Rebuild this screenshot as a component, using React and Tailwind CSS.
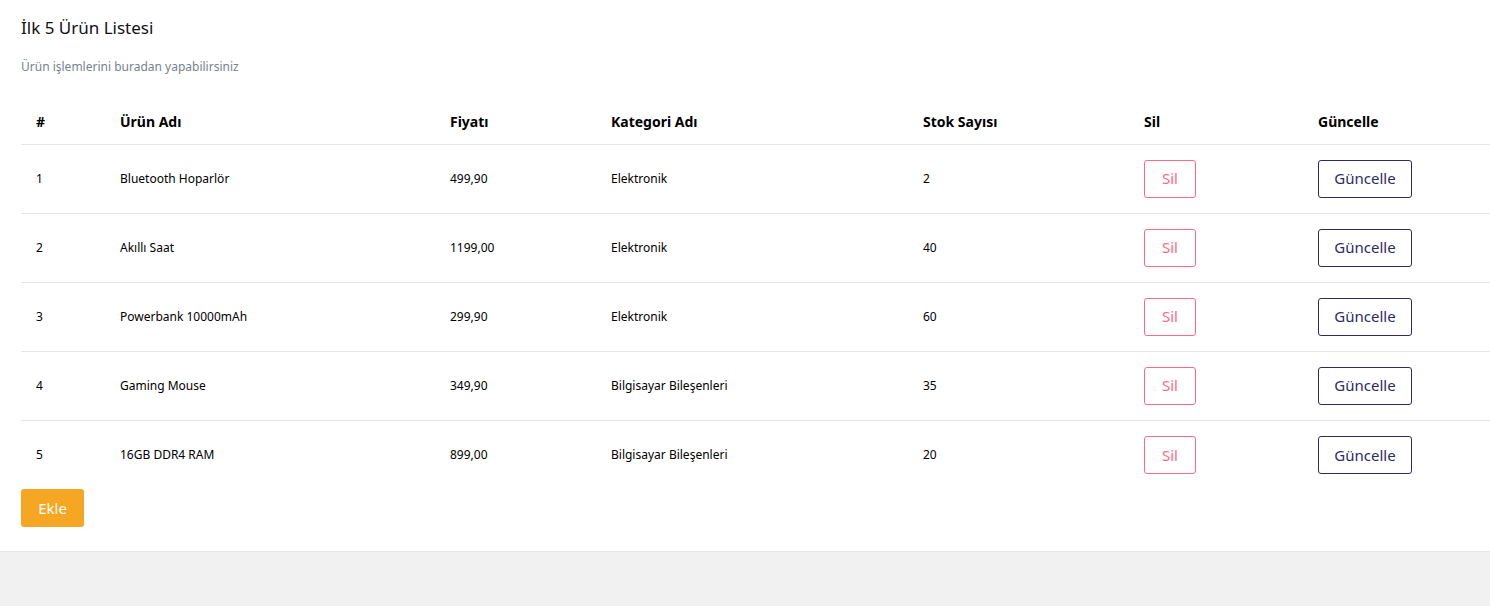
const products = [
  { id: 1, name: "Bluetooth Hoparlör", price: "499,90", category: "Elektronik", stock: 2 },
  { id: 2, name: "Akıllı Saat", price: "1199,00", category: "Elektronik", stock: 40 },
  { id: 3, name: "Powerbank 10000mAh", price: "299,90", category: "Elektronik", stock: 60 },
  { id: 4, name: "Gaming Mouse", price: "349,90", category: "Bilgisayar Bileşenleri", stock: 35 },
  { id: 5, name: "16GB DDR4 RAM", price: "899,00", category: "Bilgisayar Bileşenleri", stock: 20 },
];

export default function App() {
  return (
    <div className="min-h-[606px] bg-[#f1f1f1] font-['Noto_Sans',sans-serif] text-black">
      <div className="bg-white border-b border-[#e4e4ee] pl-[21px] pt-[16px] pb-[24px]">
        <h4 className="text-[17px] leading-[24px] text-[#111]">İlk 5 Ürün Listesi</h4>
        <p className="mt-[19px] text-[12px] leading-[16px] text-[#76838f]">Ürün işlemlerini buradan yapabilirsiniz</p>

        {/* Ürün tablosu */}
        <table className="mt-[25px] w-full table-fixed border-collapse">
          <colgroup>
            <col className="w-[84px]" />
            <col className="w-[330px]" />
            <col className="w-[161px]" />
            <col className="w-[312px]" />
            <col className="w-[221px]" />
            <col className="w-[174px]" />
            <col />
          </colgroup>
          <thead>
            <tr className="border-b border-[#e4e4f0] text-left">
              <th className="px-[15px] h-[44px] text-[14px] font-bold">#</th>
              <th className="px-[15px] h-[44px] text-[14px] font-bold">Ürün Adı</th>
              <th className="px-[15px] h-[44px] text-[14px] font-bold">Fiyatı</th>
              <th className="px-[15px] h-[44px] text-[14px] font-bold">Kategori Adı</th>
              <th className="px-[15px] h-[44px] text-[14px] font-bold">Stok Sayısı</th>
              <th className="px-[15px] h-[44px] text-[14px] font-bold">Sil</th>
              <th className="px-[15px] h-[44px] text-[14px] font-bold">Güncelle</th>
            </tr>
          </thead>
          <tbody>
            {products.map((p, i) => (
              <tr key={p.id} className={i < products.length - 1 ? "border-b border-[#e4e4f0]" : ""}>
                <td className="px-[15px] h-[69px] text-[12px]">{p.id}</td>
                <td className="px-[15px] h-[69px] text-[12px]">{p.name}</td>
                <td className="px-[15px] h-[69px] text-[12px]">{p.price}</td>
                <td className="px-[15px] h-[69px] text-[12px]">{p.category}</td>
                <td className="px-[15px] h-[69px] text-[12px]">{p.stock}</td>
                <td className="px-[15px] h-[69px]">
                  <button className="h-[38px] w-[52px] rounded-[3px] border border-[#fe6a85] text-[15px] text-[#fe6a85]">Sil</button>
                </td>
                <td className="px-[15px] h-[69px]">
                  <button className="h-[38px] w-[94px] rounded-[3px] border border-[#2e2a68] text-[15px] text-[#2e2a68]">Güncelle</button>
                </td>
              </tr>
            ))}
          </tbody>
        </table>

        <button className="h-[38px] w-[63px] rounded-[3px] bg-[#f5a623] text-[15px] text-white">Ekle</button>
      </div>
    </div>
  );
}
